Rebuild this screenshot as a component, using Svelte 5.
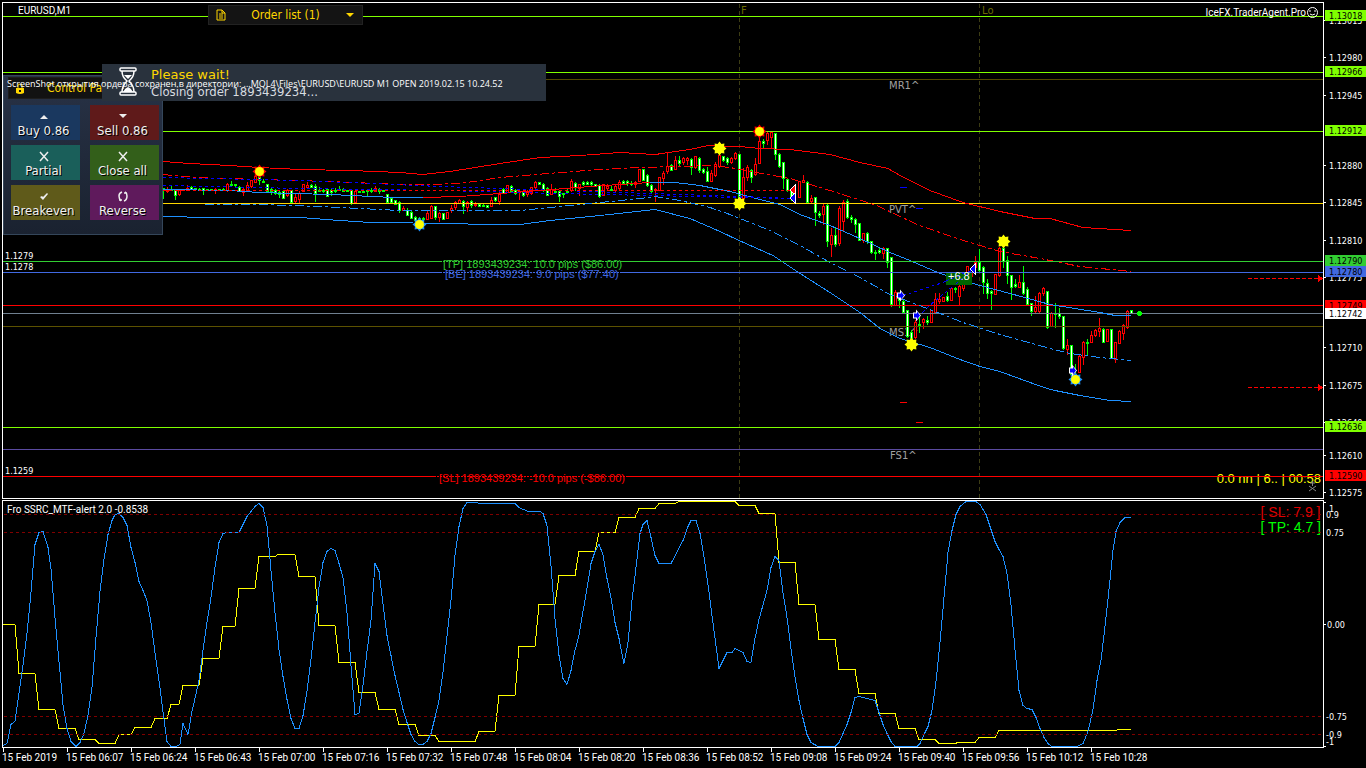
<script>
	// each candle: x, high, open/close top, open/close bottom, low, colour (g = down, r = up)
	const candleData = `163 188 188 190 198 g;167 187 190 191 192 r;171 186 189 190 190 g;175 190 190 195 199 g;179 190 190 194 195 r;183 189 189 190 190 r;187 185 188 190 190 r;191 186 187 189 189 g;195 188 188 189 190 g;199 188 189 190 190 g;203 188 188 190 194 g;207 189 189 190 190 g;211 189 189 190 190 g;215 188 189 190 193 r;219 189 189 190 190 g;223 188 189 190 190 g;227 183 184 190 191 r;231 181 184 185 186 g;235 184 184 185 186 g;239 186 187 191 191 g;243 188 189 192 195 r;247 182 185 190 190 r;251 180 180 186 187 r;255 175 176 182 182 r;259 176 177 180 184 g;263 179 181 182 182 g;267 184 184 191 191 g;271 187 189 191 194 g;275 189 190 193 194 g;279 190 192 194 197 g;283 191 191 198 198 g;287 189 190 195 196 r;291 190 190 202 202 g;295 194 197 201 202 r;299 191 193 199 203 r;303 184 184 191 191 r;307 182 185 187 188 r;311 184 185 187 187 g;315 184 186 193 201 g;319 187 190 191 191 g;323 189 190 191 192 g;327 188 189 196 196 g;331 189 190 192 195 g;335 188 190 191 192 g;339 186 189 190 190 g;343 188 189 191 191 g;347 190 190 191 191 g;351 190 190 203 204 g;355 191 191 202 202 r;359 191 191 192 192 g;363 191 191 192 192 g;367 190 190 191 195 g;371 188 190 191 192 g;375 186 188 191 191 r;379 188 189 191 193 g;383 190 190 191 191 g;387 194 194 202 202 g;391 198 198 202 202 g;395 200 200 204 204 g;399 201 202 210 212 g;403 206 208 210 210 r;407 208 210 215 215 g;411 210 212 218 218 g;415 216 217 220 220 g;419 217 218 219 220 g;423 217 218 219 219 g;427 211 213 219 219 r;431 205 206 218 218 r;435 206 206 217 219 g;439 212 213 217 221 r;443 213 213 219 219 g;447 212 212 218 218 r;451 205 208 210 212 r;455 201 202 207 209 r;459 199 200 203 203 r;463 200 201 206 213 g;467 201 202 207 211 r;471 200 201 205 207 g;475 202 204 205 206 r;479 204 204 206 206 g;483 204 205 206 206 g;487 205 205 207 207 g;491 197 200 206 206 r;495 197 197 200 201 g;499 190 194 201 204 r;503 188 189 193 193 g;507 185 185 192 192 r;511 185 186 191 192 g;515 189 190 193 194 g;519 190 191 192 199 r;523 191 191 195 196 g;527 190 192 194 196 r;531 187 187 193 194 r;535 181 182 187 188 r;539 182 182 184 184 g;543 183 184 190 191 g;547 187 188 195 195 g;551 184 189 194 194 r;555 188 191 192 192 g;559 190 191 196 201 g;563 193 193 194 197 g;567 188 191 192 193 g;571 179 181 190 191 r;575 182 183 187 190 g;579 184 184 188 195 r;583 181 182 184 185 g;587 181 182 184 184 g;591 181 182 184 185 g;595 184 184 186 186 g;599 184 185 196 197 g;603 184 184 195 195 r;607 184 186 188 190 r;611 186 189 190 190 g;615 185 186 190 191 r;619 180 182 188 189 r;623 180 181 183 184 g;627 180 181 183 185 g;631 181 183 184 185 g;635 181 182 184 187 r;639 169 169 181 181 r;643 169 169 180 180 g;647 174 175 185 186 g;651 184 185 191 193 g;655 188 189 190 201 r;659 177 177 190 190 r;663 171 173 178 184 r;667 152 166 171 173 r;671 164 165 170 170 g;675 156 160 169 169 r;679 156 160 163 165 g;683 157 158 162 164 r;687 157 158 160 164 r;691 158 159 167 174 g;695 156 156 167 168 r;699 157 158 170 172 g;703 168 169 172 173 g;707 167 171 181 181 g;711 170 173 181 181 r;715 162 164 175 176 r;719 153 155 166 167 r;723 156 156 160 161 g;727 157 158 162 164 g;731 157 158 162 163 r;735 152 153 158 159 r;739 154 154 206 206 g;743 168 177 198 200 r;747 165 167 177 180 r;751 169 170 177 182 g;755 158 164 174 175 r;759 136 141 163 163 r;763 139 141 143 148 g;767 131 133 140 144 r;771 131 132 137 148 r;775 133 133 154 159 g;779 153 154 166 167 g;783 162 162 178 188 g;787 179 179 190 191 g;791 188 190 196 200 g;799 181 181 197 197 r;803 175 180 182 182 r;807 181 182 202 203 g;811 195 198 201 202 r;815 197 197 212 225 g;819 211 213 215 217 g;823 204 206 214 224 r;827 203 205 241 246 g;831 228 235 244 256 r;835 227 235 244 246 g;839 206 208 243 245 r;843 200 202 221 230 r;847 199 201 217 218 g;851 215 217 219 222 g;855 218 219 224 232 g;859 223 223 240 240 g;863 233 233 240 242 r;867 232 233 241 243 g;871 241 241 252 253 g;875 250 252 253 259 g;879 247 250 252 253 g;883 247 248 253 258 r;887 248 248 262 267 g;891 257 257 304 306 g;895 290 292 305 305 r;899 295 297 300 307 g;903 299 301 312 312 g;907 310 310 336 337 g;911 330 332 338 341 g;915 320 322 337 338 r;919 314 324 325 332 g;923 318 319 322 328 r;927 316 320 322 324 g;931 310 310 322 322 r;935 293 299 312 312 r;939 293 299 301 303 r;943 297 297 301 301 r;947 292 296 300 301 g;951 287 288 300 300 r;955 287 288 289 292 g;959 284 286 296 305 r;963 283 284 288 290 r;967 266 266 274 282 r;971 268 270 276 280 r;975 256 262 267 272 r;979 249 262 270 272 g;983 266 267 282 293 g;987 279 283 293 298 g;991 290 291 293 309 g;995 274 274 294 294 r;999 247 248 275 276 r;1003 247 248 261 267 g;1007 256 260 275 283 g;1011 275 275 287 299 g;1015 279 284 286 287 g;1019 275 282 287 287 r;1023 266 282 293 294 g;1027 287 289 304 305 g;1031 303 303 311 315 g;1035 296 307 311 312 r;1039 292 293 311 312 r;1043 287 288 293 295 r;1047 291 291 327 328 g;1051 312 313 326 326 r;1055 303 313 314 327 g;1059 308 313 316 318 g;1063 316 316 348 349 g;1067 339 345 349 354 r;1071 345 345 374 376 g;1075 364 374 377 378 g;1079 355 356 372 372 r;1083 341 342 357 364 r;1087 339 342 343 355 g;1091 331 335 342 342 r;1095 329 330 335 336 r;1099 318 328 331 336 r;1103 328 329 342 342 g;1107 329 329 341 341 r;1111 329 329 358 358 g;1115 342 342 359 362 r;1119 330 331 343 343 r;1123 324 325 333 339 r;1127 310 311 327 328 r;1131 310 310 313 313 g`

	const candles = candleData.split(';').map((row) => {
		const [x, high, top, bottom, low, dir] = row.trim().split(' ')
		return { x: +x, high: +high, top: +top, bottom: +bottom, low: +low, down: dir == 'g' }
	})

	const levels = [
		{ y: 16, color: '#7fff00' },
		{ y: 72, color: '#7fff00' },
		{ y: 79, color: '#554a00' },
		{ y: 131, color: '#7fff00' },
		{ y: 203, color: '#ffd700' },
		{ y: 305, color: '#ff0000' },
		{ y: 313, color: '#708090' },
		{ y: 326, color: '#5c5200' },
		{ y: 427, color: '#7fff00' },
		{ y: 449, color: '#5a4aa0' }
	]

	const orderLines = [
		{ y: 261, from: 440, to: 621, color: '#32cd32', textX: 443, textY: 268, text: '[TP] 1893439234: 10.0 pips ($86.00)' },
		{ y: 272, from: 440, to: 621, color: '#4169e1', textX: 445, textY: 278, text: '[BE] 1893439234: 9.0 pips ($77.40)' },
		{ y: 476, from: 434, to: 628, color: '#ff0000', textX: 439, textY: 482, text: '[SL] 1893439234: -10.0 pips (-$86.00)' }
	]

	const bands = [
		{ kind: 'red', points: '163,161 190,163 230,165 259,167 300,169 350,170 400,172 423,174 450,171 500,163 540,157 580,155 620,152 655,154 690,149 708,145 740,146 760,148 790,149 830,154 860,162 888,168 900,175 930,190 963,202 1000,211 1035,218 1050,218 1083,227 1131,230' },
		{ kind: 'red dashdot', points: '163,174 195,177 259,179 330,181 400,184 430,184 460,183 500,177 560,172 600,169 640,167 680,166 710,165 730,167 750,171 790,178 830,190 877,205 917,224 960,239 980,245 1000,251 1040,258 1080,266 1131,271' },
		{ kind: 'blue', points: '163,189 230,190 259,192 330,194 393,197 423,197' },
		{ kind: 'red', points: '423,197 460,196 500,193 540,190 590,186 650,182' },
		{ kind: 'blue', points: '650,182 675,182 700,185 730,191 760,199 780,204 800,214 830,225 860,238 890,252 910,260 940,273 980,285 1010,293 1050,304 1100,312 1115,315 1131,315' },
		{ kind: 'blue dashdot', points: '205,204 260,204 320,206 400,210 520,210 560,206 600,202 640,198 655,196 680,200 710,207 730,214 770,230 800,245 830,262 860,277 890,294 930,309 963,322 1000,334 1050,348 1070,353 1100,357 1131,360' },
		{ kind: 'blue', points: '163,216 210,217 300,217 340,220 370,222 455,223 480,224 520,224 550,220 600,215 655,209 690,218 720,231 739,240 773,255 800,273 830,292 860,312 880,328 900,338 930,347 960,359 980,366 1000,371 1030,382 1050,389 1080,395 1110,400 1131,401' },
		{ kind: 'navy', points: '163,177 300,180 440,186 560,190 739,196 793,198' },
		{ kind: 'navy', points: '163,185 300,188 440,190 560,193 739,197 793,198' },
		{ kind: 'red dotted', points: '163,190 792,190' },
		{ kind: 'navy', points: '903,295 940,283 972,270' },
		{ kind: 'navy', points: '918,316 932,303 972,270' }
	]

	const stars = [
		{ x: 259, y: 171, rim: '#ff0000' },
		{ x: 419, y: 224, rim: '#1e90ff' },
		{ x: 719, y: 148, rim: '#ffff00' },
		{ x: 739, y: 203, rim: '#ffff00' },
		{ x: 759, y: 131, rim: '#ff0000' },
		{ x: 911, y: 344, rim: '#ffff00' },
		{ x: 1003, y: 241, rim: '#ffff00' },
		{ x: 1075, y: 379, rim: '#1e90ff' }
	]

	const closes = [
		{ x: 793, y: 190, color: '#ff0000' },
		{ x: 793, y: 198, color: '#0000ff' },
		{ x: 973, y: 269, color: '#0000ff' }
	]

	const opens = [
		{ x: 901, y: 295 },
		{ x: 917, y: 315 },
		{ x: 1073, y: 370 }
	]

	const pivots = [
		{ text: 'MR1^', x: 889, y: 89 },
		{ text: 'PVT^', x: 889, y: 213 },
		{ text: 'MS1^', x: 889, y: 336 },
		{ text: 'FS1^', x: 890, y: 459 }
	]

	const marks = [
		{ x: 900, y: 187, color: '#0000ff' },
		{ x: 916, y: 208, color: '#0000ff' },
		{ x: 900, y: 402, color: '#ff0000' },
		{ x: 916, y: 422, color: '#ff0000' }
	]

	const prices = [
		['1.13015', 20], ['1.12980', 57], ['1.12945', 95], ['1.12880', 165], ['1.12845', 202], ['1.12810', 240],
		['1.12775', 277], ['1.12710', 347], ['1.12675', 385], ['1.12640', 422], ['1.12610', 455], ['1.12575', 492]
	]

	const tags = [
		['1.13018', 15, '#7fff00'], ['1.12966', 71, '#7fff00'], ['1.12912', 130, '#7fff00'], ['1.12790', 260, '#32cd32'],
		['1.12780', 271, '#4169e1'], ['1.12749', 305, '#ff0000'], ['1.12742', 313, '#ffffff'], ['1.12636', 426, '#7fff00'],
		['1.12590', 475, '#ff0000']
	]

	const oscScale = [
		['1', 508, 1329], ['0.9', 514, 1326], ['0.75', 532, 1326], ['0.00', 624, 1327], ['-0.75', 716, 1326], ['-0.9', 734, 1326], ['-1', 741, 1326]
	]

	const oscLevels = [514, 532, 716, 734]

	const slow = '3,624 15,624 19,673 35,673 39,709 55,709 59,728 75,728 79,739 95,739 99,743 115,743 119,734 131,734 135,727 151,727 155,718 167,718 171,704 179,704 183,685 199,685 203,658 219,658 223,626 235,626 239,588 255,588 259,556 275,556 278,554 295,554 299,576 315,576 319,625 335,625 339,662 355,662 359,692 375,692 379,709 395,709 399,724 415,724 419,735 435,735 439,741 475,741 479,731 495,731 499,695 515,695 519,646 535,646 539,604 555,604 559,575 575,575 579,551 595,551 599,532 615,532 619,517 635,517 639,508 655,508 659,503 675,503 679,501 735,501 739,505 755,505 759,513 775,513 779,562 795,562 799,604 815,604 819,639 835,639 839,669 855,669 859,693 875,693 879,713 895,713 899,728 915,728 919,739 935,739 939,743 956,743 957,742 975,742 979,737 995,737 999,730 1116,730 1118,729 1131,729'

	const fast = '3,745 7,743 11,724 15,721 19,693 23,665 27,633 31,592 35,544 39,532 43,531 48,547 51,568 55,617 59,661 63,704 67,728 71,741 76,746 80,742 84,733 88,715 92,687 96,637 100,591 104,559 108,534 112,520 115,514 119,513 123,517 127,525 131,547 135,562 139,581 143,590 147,600 151,622 155,652 159,680 163,711 167,741 171,746 176,746 180,744 183,723 188,734 192,711 199,680 203,650 207,622 211,597 215,567 219,542 223,533 227,532 239,532 247,516 255,506 259,503 263,507 267,525 271,570 275,612 279,649 283,676 287,699 291,718 295,728 299,728 303,715 307,691 311,659 315,622 319,587 323,562 327,551 331,548 335,550 339,563 343,577 347,612 351,665 355,714 359,713 363,685 367,651 371,620 375,563 379,571 383,603 387,635 391,655 395,675 399,692 403,709 407,722 411,734 415,741 419,744 423,744 427,741 431,733 435,717 439,700 443,672 447,636 451,600 455,555 459,526 463,508 467,502 477,502 479,503 515,503 519,507 528,511 540,511 543,513 547,525 551,565 555,618 559,655 563,678 567,684 571,670 575,650 579,635 583,611 587,588 591,563 595,551 599,544 603,554 607,578 611,597 615,622 619,638 624,663 628,642 632,600 636,567 640,533 643,524 647,520 651,537 655,555 659,563 671,563 683,540 688,526 691,520 696,520 700,533 704,556 708,584 712,615 716,645 719,668 723,660 727,652 732,652 735,648 743,652 747,661 751,662 755,638 759,619 767,590 771,567 775,556 779,560 783,592 787,617 791,648 795,676 799,700 803,718 807,734 811,742 818,746 835,746 839,742 843,733 847,724 851,712 855,697 859,696 867,698 875,700 879,712 883,724 887,733 891,741 895,746 917,746 920,743 924,734 928,726 932,710 936,681 940,642 944,597 948,552 952,530 956,514 960,506 966,501 976,501 980,504 986,514 990,526 995,541 999,549 1003,556 1007,573 1011,604 1015,649 1019,690 1023,705 1027,708 1032,709 1036,717 1040,728 1044,737 1048,743 1052,746 1077,746 1083,743 1088,731 1093,709 1097,680 1101,660 1105,626 1109,589 1113,550 1116,531 1120,522 1125,517 1131,517'

	const times = ['2019', '06:07', '06:24', '06:43', '07:00', '07:16', '07:32', '07:48', '08:04', '08:20', '08:36', '08:52', '09:08', '09:24', '09:40', '09:56', '10:12', '10:28']

	const actions = [
		{ name: 'Buy 0.86', kind: 'buy', icon: 'M1 8h8L5 4z', solid: true },
		{ name: 'Sell 0.86', kind: 'sell', icon: 'M1 3h8L5 7z', solid: true },
		{ name: 'Partial', kind: 'partial', icon: 'M1 1l8 9M9 1L1 10' },
		{ name: 'Close all', kind: 'close', icon: 'M1 1l8 9M9 1L1 10' },
		{ name: 'Breakeven', kind: 'even', icon: 'M1 6l2-1 1 1 4-4 1 1-5 6z', solid: true },
		{ name: 'Reverse', kind: 'reverse', icon: 'M4 1Q1 2 1 5q0 3 2 5M1 9h3M6 10q3-1 3-5 0-3-2-4M9 2H6' }
	]

	// eight points alternating between radius 7 and radius 5
	const burst = Array.from({ length: 16 }, (_, i) => {
		const r = i % 2 ? 5 : 7
		const a = (i * Math.PI) / 8
		return (r * Math.sin(a)).toFixed(1) + ',' + (-r * Math.cos(a)).toFixed(1)
	}).join(' ')

	let listOpen = false
</script>

<main>
	<section class="plot">
		<svg class="price" shape-rendering="crispEdges" aria-label="EURUSD price chart">
			<g transform="translate(-3 -3)">
				{#each [739, 979] as x}
					<path class="separator" d="M{x + 0.5} 4V500" />
				{/each}
				{#each pivots as pivot}
					<text class="pivot" x={pivot.x} y={pivot.y}>{pivot.text}</text>
				{/each}
				{#each orderLines as order}
					<text class="order" x={order.textX} y={order.textY} fill={order.color}>{order.text}</text>
				{/each}
				{#each candles as c}
					<rect x={c.x} y={c.high} width="1" height={c.low - c.high + 1} fill={c.down ? '#0f0' : '#f00'} />
					<rect x={c.x - 1} y={c.top} width="3" height={c.bottom - c.top + 1} fill={c.down ? '#0f0' : '#f00'} />
					{#if c.bottom - c.top > 1}
						<rect x={c.x} y={c.top + 1} width="1" height={c.bottom - c.top - 1} fill={c.down ? '#fff' : '#000'} />
					{/if}
				{/each}
				{#each levels as level}
					<rect x="3" y={level.y} width="100%" height="1" fill={level.color} />
				{/each}
				{#each bands as band}
					<polyline class={band.kind} points={band.points} transform="translate(0 0.5)" />
				{/each}
				{#each marks as mark}
					<rect x={mark.x} y={mark.y} width="7" height="1" fill={mark.color} />
				{/each}
				{#each orderLines as order}
					<rect x="3" y={order.y} width={order.from - 3} height="1" fill={order.color} />
					<path class="under" d="M{order.from} {order.y + 0.5}H{order.to}" stroke={order.color} />
					<rect x={order.to} y={order.y} width="100%" height="1" fill={order.color} />
				{/each}
				<rect x="946" y="273" width="26" height="12" fill="#006400" />
				<path class="navy" d="M946 281L972 270M956 284L972 270" />
				<text class="profit" x="948" y="280">+6.8</text>
				{#each stars as star}
					<g transform="translate({star.x + 0.5} {star.y + 0.5})" shape-rendering="auto">
						<polygon points={burst} fill={star.rim} />
						<circle r="4.500" fill="#ff0" />
					</g>
				{/each}
				{#each closes as mark}
					<path d="M{mark.x + 2} {mark.y - 5}v10l-5-5z" fill={mark.color} stroke="#fff" />
				{/each}
				{#each opens as mark}
					<g transform="translate({mark.x} {mark.y + 0.5})" shape-rendering="auto">
						<path d="M-4-3h3v-3l5 6-5 6v-3h-3z" fill="#fff" />
						<path d="M-3-2h3v-2l3 4-3 4v-2h-3z" fill="#00f" />
					</g>
				{/each}
				<circle cx="1139.500" cy="313.500" r="2.500" fill="#0f0" />
				<text class="title" x="18" y="14">EURUSD,M1</text>
				<text class="label" x="5" y="259">1.1279</text>
				<text class="label" x="5" y="270">1.1278</text>
				<text class="label" x="5" y="474">1.1259</text>
				<text class="session" x="741" y="14">F</text>
				<text class="session" x="982" y="14">Lo</text>
			</g>
		</svg>
		<div class="agent">
			<span>IceFX.TraderAgent.Pro</span>
			<svg width="13" height="13" viewBox="0 0 13 13" aria-hidden="true">
				<circle cx="6.500" cy="6.500" r="5" class="face" />
				<path d="M4 4v2M9 4v2M4 8q2 2 5 0" class="face" />
			</svg>
		</div>
		<svg class="stops" width="75" height="112" shape-rendering="crispEdges" aria-hidden="true">
			<path class="red short" d="M0 1.500H70M0 110.500H70" />
			<path d="M70-2l5 3.500-5 3.500zM70 107l5 3.500-5 3.500z" fill="#f00" />
		</svg>
		<div class="status">0.0 nn | 6.. | 00:58</div>
		<svg class="stop-line" shape-rendering="crispEdges" aria-hidden="true">
			<rect width="100%" height="1" fill="#f00" />
		</svg>
		<svg class="off" width="9" height="11" viewBox="0 0 9 11" aria-hidden="true">
			<path d="M4.500 0v5M2 2h5M1 5l7 5M8 5l-7 5" />
		</svg>
	</section>

	<svg class="scale" shape-rendering="crispEdges" aria-label="Price scale">
		<g transform="translate(-1324 -2)">
			{#each prices as [text, y]}
				<rect x="1324" y={y} width="2" height="1" fill="#fff" />
				<text class="label" x="1329" y={y + 4}>{text}</text>
			{/each}
			{#each tags as [text, y, color]}
				<rect x="1325" y={y - 5} width="41" height="11" fill={color} />
				<text class="tag" x="1329" y={y + 4}>{text}</text>
			{/each}
		</g>
	</svg>

	<section class="plot">
		<svg class="osc" shape-rendering="crispEdges" aria-label="Fro SSRC oscillator">
			<g transform="translate(-3 -501)">
				<polyline class="slow" points={slow} transform="translate(0 0.5)" />
				<polyline class="blue" points={fast} transform="translate(0 0.5)" />
				<text class="title" x="7" y="513">Fro SSRC_MTF-alert 2.0 -0.8538</text>
			</g>
		</svg>
		<div class="targets">
			<span class="sl">[ SL: 7.9 ]</span>
			<span class="tp">[ TP: 4.7 ]</span>
		</div>
		<svg class="osc over" shape-rendering="crispEdges" aria-hidden="true">
			{#each oscLevels as y}
				<line class="level" x1="1" x2="100%" y1={y - 500.5} y2={y - 500.5} />
			{/each}
		</svg>
	</section>

	<svg class="scale" shape-rendering="crispEdges" aria-label="Oscillator scale">
		<g transform="translate(-1324 -500)">
			{#each oscScale as [text, y, x]}
				<text class="label" x={x} y={y + 4}>{text}</text>
			{/each}
			<path d="M1324 502.500h2M1324 624.500h2M1324 746.500h2" stroke="#fff" />
		</g>
	</svg>

	<div class="times">
		{#each times as time}
			<span>15 Feb {time}</span>
		{/each}
	</div>

	<button class="orders" type="button" on:click={() => (listOpen = !listOpen)}>
		<svg width="10" height="12" viewBox="0 0 10 12" aria-hidden="true">
			<path d="M1 1h5l3 3v7H1zM6 1v3h3M3 5h4M3 7h4M3 9h4" class="gold" />
		</svg>
		<span>Order list (1)</span>
		<svg width="10" height="6" viewBox="0 0 10 6" aria-hidden="true">
			<path d="M1 1h8L5 5z" fill="#ffd700" />
		</svg>
	</button>

	<section class="panel">
		<h2>
			<svg width="8" height="11" viewBox="0 0 8 11" aria-hidden="true">
				<path d="M2 5V2q2-2 4 0v3" class="gold" />
				<path d="M0 5h8v5q-4 2-8 0z" fill="#ffd700" />
				<path d="M3 7h2v2H3z" fill="#111" />
			</svg>
			<span>Control Panel</span>
		</h2>
		<div class="actions">
			{#each actions as action}
				<button class={action.kind} type="button">
					<svg width="10" height="11" viewBox="0 0 10 11" aria-hidden="true">
						<path d={action.icon} class={action.solid ? 'solid' : 'stroke'} />
					</svg>
					{action.name}
				</button>
			{/each}
		</div>
	</section>

	<div class="notice" role="status">
		<svg width="18" height="29" viewBox="0 0 18 29" aria-hidden="true">
			<rect x="1" y="1" width="16" height="3" rx="1" class="glass" />
			<rect x="1" y="25" width="16" height="3" rx="1" class="glass" />
			<path d="M3 4q0 6 5 10-5 5-5 11M15 4q0 6-5 10 5 5 5 11" class="glass" />
			<path d="M4 25q2-4 5-5 3 1 5 5zM5 8h8l-4 4z" fill="#fff" />
		</svg>
		<div>
			<strong>Please wait!</strong>
			<p>Closing order 1893439234...</p>
		</div>
	</div>

	<p class="comment">ScreenShot открытия ордера сохранен в директории: ...MQL4\Files\EURUSD\EURUSD M1 OPEN 2019.02.15 10.24.52</p>
</main>

<style>
	:global(body) {
		margin: 0;
		background: #000;
	}
	main {
		position: relative;
		display: grid;
		grid-template-columns: minmax(0, 1fr) 42px;
		row-gap: 1px;
		padding: 2px 0 0 2px;
		overflow: hidden;
		background: #000;
		color: #fff;
		font-family: Roboto, sans-serif;
		font-size: 10px;
	}
	p, h2 {
		margin: 0;
		font-weight: normal;
	}
	svg {
		display: block;
		fill: none;
	}
	.plot {
		position: relative;
		border: 1px solid #fff;
	}
	.price, .osc {
		width: 100%;
		height: 495px;
	}
	.osc {
		height: 246px;
	}
	.over {
		position: absolute;
		inset: 0;
	}
	.scale {
		width: 100%;
		height: 100%;
	}
	.title {
		fill: #fff;
	}
	.label, .tag {
		fill: #fff;
		font: 9px "DejaVu Sans Condensed", sans-serif;
	}
	.tag {
		fill: #000;
	}
	.pivot {
		fill: #a0a0a0;
		font: 10px "DejaVu Sans", sans-serif;
	}
	.session {
		fill: #6b6b00;
		font: 10px "DejaVu Sans", sans-serif;
	}
	.order, .profit {
		font: 11px "Liberation Sans", sans-serif;
	}
	.profit {
		fill: #fff;
	}
	.separator {
		stroke: #3c3c14;
		stroke-dasharray: 4 3;
	}
	.red {
		stroke: #f00;
	}
	.blue {
		stroke: #1e90ff;
	}
	.navy {
		stroke: #00f;
		stroke-dasharray: 3 3;
	}
	.slow {
		stroke: #ff0;
	}
	.dashdot {
		stroke-dasharray: 9 3 3 3;
	}
	.dotted {
		stroke-dasharray: 3 3;
	}
	.short {
		stroke-dasharray: 4 2;
	}
	.under {
		stroke-dasharray: 2 1;
	}
	.level {
		stroke: #800000;
		stroke-dasharray: 3 3;
	}
	.agent {
		position: absolute;
		top: 3px;
		right: 4px;
		display: flex;
		align-items: center;
	}
	.face {
		stroke: #fff;
	}
	.stops {
		position: absolute;
		top: 274px;
		right: 0;
		overflow: visible;
	}
	.status {
		position: absolute;
		right: 2px;
		bottom: 11px;
		color: #ff0;
		font: 13px/16px "Liberation Sans", sans-serif;
	}
	.stop-line {
		position: absolute;
		top: 473px;
		right: 0;
		width: 120px;
		height: 1px;
	}
	.off {
		position: absolute;
		right: 6px;
		bottom: 6px;
		stroke: #888;
	}
	.targets {
		position: absolute;
		top: 4px;
		right: 2px;
		display: flex;
		flex-direction: column;
		font: 14px/15px "Liberation Sans", sans-serif;
	}
	.sl {
		color: #e00000;
	}
	.tp {
		color: #0f0;
	}
	.times {
		grid-column: 1 / -1;
		display: flex;
		height: 20px;
		margin-top: -1px;
	}
	.times span {
		flex: 0 0 64px;
		line-height: 20px;
		white-space: nowrap;
		background: linear-gradient(#fff, #fff) 1px 0 / 1px 4px no-repeat;
	}
	button {
		margin: 0;
		padding: 0;
		border: 0;
		font: 13px/14px "DejaVu Sans Condensed", sans-serif;
		cursor: pointer;
	}
	.orders {
		position: absolute;
		top: 5px;
		left: 208px;
		display: flex;
		align-items: center;
		justify-content: space-between;
		width: 155px;
		height: 20px;
		padding: 0 7px;
		border: 1px solid #222;
		background: #141414;
		color: #ffd700;
		font-size: 12px;
	}
	.gold {
		stroke: #ffd700;
	}
	.panel {
		position: absolute;
		top: 75px;
		left: 3px;
		width: 160px;
		box-sizing: border-box;
		padding: 1px 3px 14px 4px;
		border: 1px solid #34465a;
		background: linear-gradient(#283246, #1a2230);
	}
	h2 {
		display: flex;
		align-items: center;
		gap: 23px;
		height: 20px;
		padding-left: 7px;
		border: 1px solid #1d1d1d;
		background: #121212;
		color: #ffd700;
		font: 12px "DejaVu Sans Condensed", sans-serif;
		white-space: nowrap;
	}
	.actions {
		display: grid;
		grid-template-columns: 1fr 1fr;
		gap: 5px 10px;
		margin-top: 6px;
		padding-left: 3px;
	}
	.actions button {
		display: flex;
		flex-direction: column;
		align-items: center;
		justify-content: flex-end;
		gap: 2px;
		height: 35px;
		min-width: 0;
		padding: 0 4px 2px 0;
		color: #f0f0f0;
		text-shadow: 1px 1px #000;
		white-space: nowrap;
	}
	.solid {
		fill: #eee;
	}
	.stroke {
		stroke: #eee;
		stroke-width: 1.5;
	}
	.actions .buy { background: #1a385f; }
	.actions .sell { background: #5f1a1a; }
	.actions .partial { background: #1a5f5a; }
	.actions .close { background: #335f1a; }
	.actions .even { background: #5f5a1a; }
	.actions .reverse { background: #5f1a5c; }
	.notice {
		position: absolute;
		top: 64px;
		left: 102px;
		display: flex;
		gap: 14px;
		width: 444px;
		height: 37px;
		box-sizing: border-box;
		padding: 3px 17px;
		background: #29323d;
		line-height: 16px;
	}
	.glass {
		stroke: #fff;
		stroke-width: 1.5;
	}
	.notice strong {
		color: #ffd700;
		font: 13px/16px "DejaVu Sans", sans-serif;
	}
	.notice p {
		color: #d8dce0;
		font: 13px/16px "DejaVu Sans Condensed", sans-serif;
	}
	.comment {
		position: absolute;
		top: 78px;
		left: 7px;
		font: 9px/12px "Open Sans", "Noto Sans", sans-serif;
		white-space: nowrap;
	}
</style>
